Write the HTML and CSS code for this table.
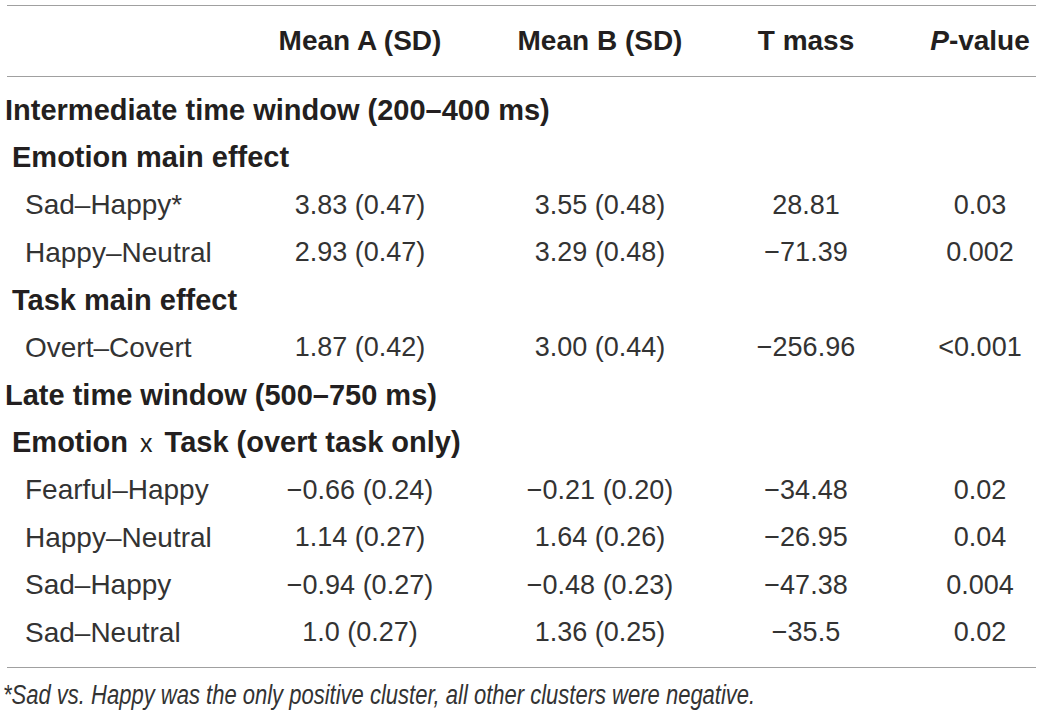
FILE: index.html
```html
<!DOCTYPE html>
<html lang="en">
<head>
    <meta charset="UTF-8">
    <meta name="viewport" content="width=device-width, initial-scale=1.0">
    <title>Cluster results</title>
    <link rel="stylesheet" href="styles.css">
</head>
<body>
    <div class="results">
        <div class="head">
            <div></div>
            <div>Mean A (SD)</div>
            <div>Mean B (SD)</div>
            <div>T mass</div>
            <div class="p"><i>P</i>-value</div>
        </div>
        <div class="body">
            <div class="row section"><div>Intermediate time window (200–400 ms)</div></div>
            <div class="row sub"><div>Emotion main effect</div></div>
            <div class="row item">
                <div>Sad–Happy*</div><div>3.83 (0.47)</div><div>3.55 (0.48)</div><div>28.81</div><div class="p">0.03</div>
            </div>
            <div class="row item">
                <div>Happy–Neutral</div><div>2.93 (0.47)</div><div>3.29 (0.48)</div><div>−71.39</div><div class="p">0.002</div>
            </div>
            <div class="row sub"><div>Task main effect</div></div>
            <div class="row item">
                <div>Overt–Covert</div><div>1.87 (0.42)</div><div>3.00 (0.44)</div><div>−256.96</div><div class="p">&lt;0.001</div>
            </div>
            <div class="row section"><div>Late time window (500–750 ms)</div></div>
            <div class="row sub"><div>Emotion <span class="by">x</span> Task (overt task only)</div></div>
            <div class="row item">
                <div>Fearful–Happy</div><div>−0.66 (0.24)</div><div>−0.21 (0.20)</div><div>−34.48</div><div class="p">0.02</div>
            </div>
            <div class="row item">
                <div>Happy–Neutral</div><div>1.14 (0.27)</div><div>1.64 (0.26)</div><div>−26.95</div><div class="p">0.04</div>
            </div>
            <div class="row item">
                <div>Sad–Happy</div><div>−0.94 (0.27)</div><div>−0.48 (0.23)</div><div>−47.38</div><div class="p">0.004</div>
            </div>
            <div class="row item">
                <div>Sad–Neutral</div><div>1.0 (0.27)</div><div>1.36 (0.25)</div><div>−35.5</div><div class="p">0.02</div>
            </div>
        </div>
        <p class="note">*Sad vs. Happy was the only positive cluster, all other clusters were negative.</p>
    </div>
</body>
</html>
```

FILE: styles.css
```css
body {
    margin: 0;
    background-color: #fff;
    color: #231f20;
    font-family: "Liberation Sans", Arial, sans-serif;
}
.results {
    margin: 5px 5px 0 7px;
}
.head, .row {
    display: grid;
    grid-template-columns: 233px 240px 240px 172px 1fr;
    align-items: center;
    text-align: center;
}
.head {
    height: 70px;
    border-top: 1px solid #a0a0a0;
    border-bottom: 1px solid #a0a0a0;
    font-size: 28px;
    font-weight: bold;
}
.p {
    padding-left: 32px;
}
.body {
    padding: 9.5px 0 10.5px;
    border-bottom: 1px solid #a0a0a0;
}
.row {
    height: 47.5px;
    font-size: 27px;
    color: #333;
}
.row > div:first-child {
    text-align: left;
    white-space: nowrap;
    font-size: 28px;
}
.section > div:first-child {
    margin-left: -2px;
    font-weight: bold;
    font-size: 29px;
    color: #231f20;
}
.sub > div:first-child {
    padding-left: 5px;
    font-weight: bold;
    font-size: 29px;
    color: #231f20;
}
.item > div:first-child {
    padding-left: 18px;
}
.by {
    font-weight: normal;
    font-size: 25px;
    margin: 0 4px;
}
.note {
    margin: 0 0 0 -4px;
    padding-top: 12px;
    font-style: italic;
    font-size: 27px;
    color: #333;
    white-space: nowrap;
    transform: scaleX(0.815);
    transform-origin: left center;
}
```
